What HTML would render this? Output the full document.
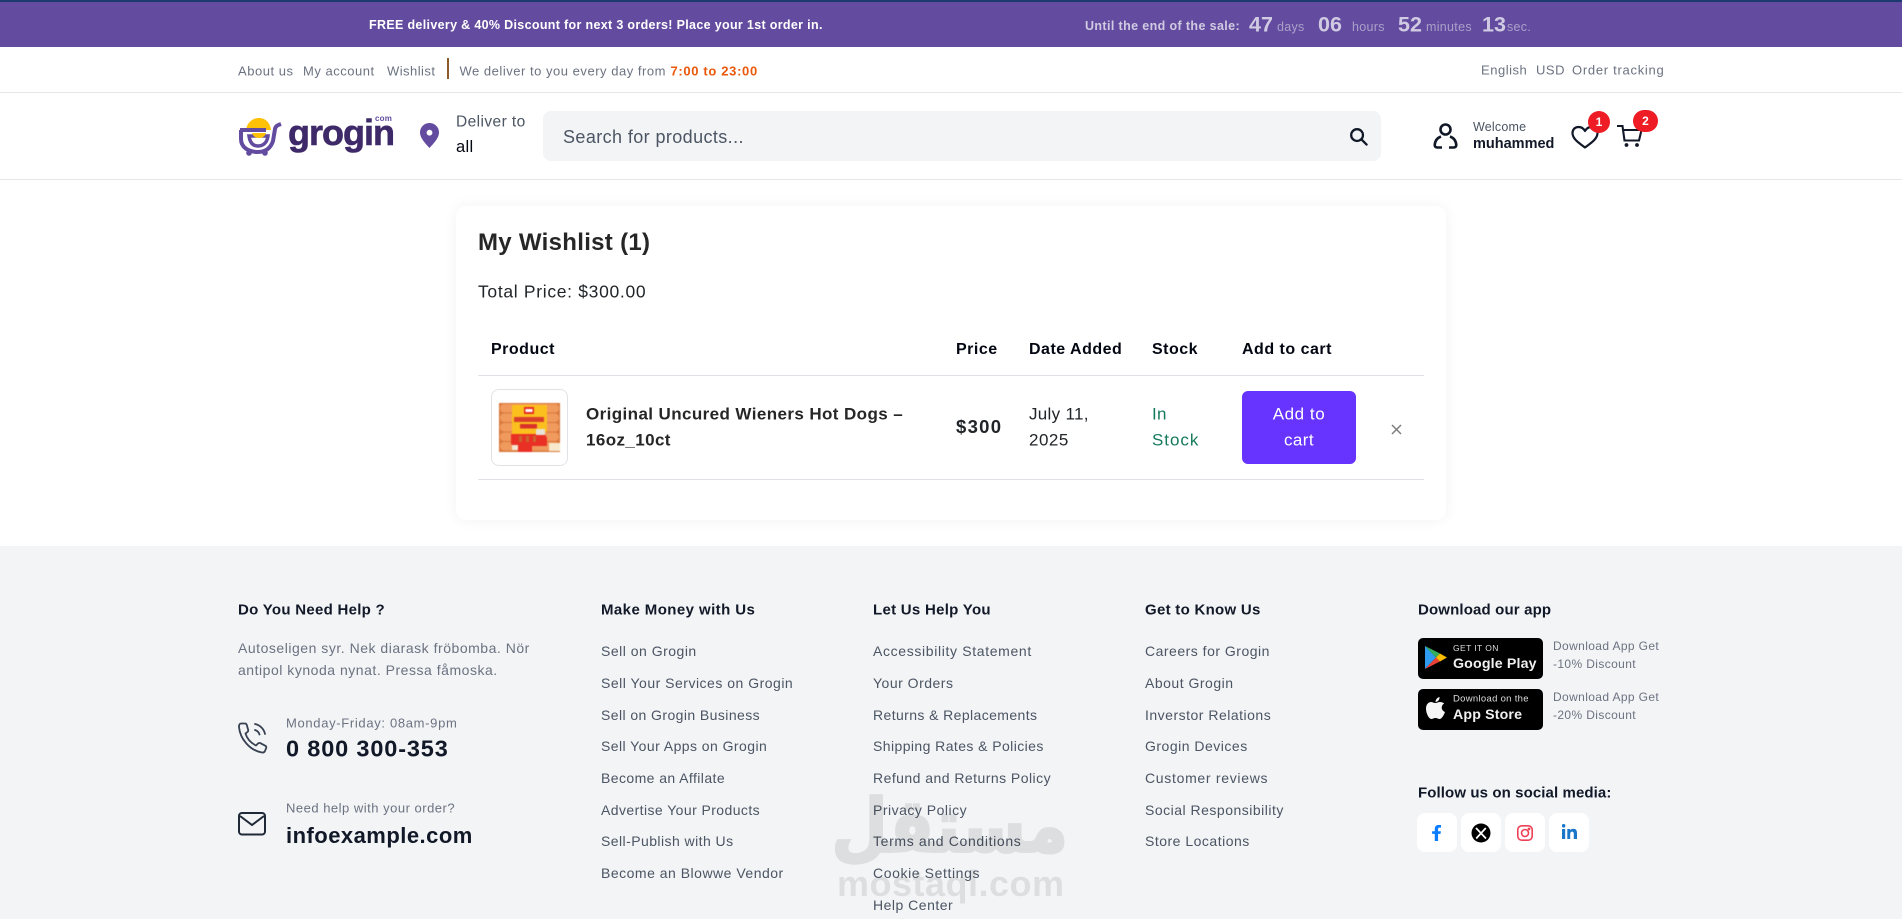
<!DOCTYPE html>
<html lang="en"><head><meta charset="utf-8"><title>My Wishlist</title>
<style>
html,body{margin:0;padding:0;background:#fff}
body{width:1902px;height:919px;overflow:hidden;position:relative;font-family:"Liberation Sans",Arial,sans-serif;color:#111827}
.t{position:absolute;white-space:nowrap;line-height:1;transform:translateY(-50%)}
.a{position:absolute}
.b{font-weight:700}
.top{font-size:13px;color:#6b7280;letter-spacing:.52px}
.fh{font-size:15px;font-weight:700;color:#111827;letter-spacing:.28px}
.l{font-size:14px;color:#4b5563;letter-spacing:.5px}
.th{font-size:16px;font-weight:700;color:#030712;letter-spacing:.5px}
.td{font-size:17px;color:#212529;letter-spacing:.3px}
.cd{color:#d0cae2;font-size:21.5px;font-weight:700}
.cl{color:#a9a0c9;font-size:12.5px;letter-spacing:.3px}
.soc{position:absolute;top:813px;width:40px;height:39px;background:#fff;border-radius:8px}
.app{font-size:12px;color:#6b7280;letter-spacing:.38px}
svg{display:block}
</style></head><body>

<div class="a" style="left:0;top:0;width:1902px;height:47px;background:#634c9f"></div>
<div class="a" style="left:0;top:0;width:1902px;height:2px;background:#1c3a6e"></div>
<div class="t b" style="left:369px;top:25px;font-size:12.5px;color:#fff;letter-spacing:.33px">FREE delivery &amp; 40% Discount for next 3 orders! Place your 1st order in.</div>
<div class="t b" style="left:1085px;top:26px;font-size:12.5px;color:#d0cae2;letter-spacing:.38px">Until the end of the sale:</div>
<div class="t cd" style="left:1249px;top:25px">47</div><div class="t cl" style="left:1277px;top:27px">days</div>
<div class="t cd" style="left:1318px;top:25px">06</div><div class="t cl" style="left:1352px;top:27px">hours</div>
<div class="t cd" style="left:1398px;top:25px">52</div><div class="t cl" style="left:1426px;top:27px">minutes</div>
<div class="t cd" style="left:1482px;top:25px">13</div><div class="t cl" style="left:1507px;top:27px">sec.</div>

<div class="t top" style="left:238px;top:71px">About us</div>
<div class="t top" style="left:303px;top:71px">My account</div>
<div class="t top" style="left:387px;top:71px;letter-spacing:.45px">Wishlist</div>
<div class="a" style="left:447px;top:58px;width:2px;height:21px;background:#8a5a2b"></div>
<div class="t top" style="left:459.500px;top:71px">We deliver to you every day from</div>
<div class="t b" style="left:670.500px;top:71px;font-size:13px;color:#ea580c;letter-spacing:.66px">7:00 to 23:00</div>
<div class="t top" style="left:1481px;top:70px">English</div>
<div class="t top" style="left:1536px;top:70px">USD</div>
<div class="t top" style="left:1572px;top:70px;letter-spacing:.72px">Order tracking</div>
<div class="a" style="left:0;top:92px;width:1902px;height:1px;background:#e5e7eb"></div>

<svg class="a" style="left:238px;top:117px" width="44" height="40" viewBox="0 0 44 40">
<path d="M8 13C9 5 15 1 21 1s11 4 12 12z" fill="#ffc107"/>
<path d="M2 13h26M3 13v9c0 8 7 13 17 13 9 0 13-5 15-11l2-12c.5-3 3-4 6-5" fill="none" stroke="#634c9f" stroke-width="4"/>
<path d="M11 19h19c-1 7-5 10-10 10s-8-3-9-10z" fill="none" stroke="#634c9f" stroke-width="3.5"/>
<path d="M14 16h14c-1 3-3 5-7 5s-6-2-7-5z" fill="#ffc107"/>
<circle cx="11" cy="36" r="2.8" fill="#634c9f"/><circle cx="27" cy="36" r="2.8" fill="#634c9f"/>
</svg>
<div class="t b" style="left:288px;top:133px;font-size:36px;letter-spacing:-1px;color:#3e2a68;-webkit-text-stroke:.6px #3e2a68">grogin</div>
<div class="t" style="left:375px;top:119px;font-size:8px;color:#634c9f;font-weight:700;letter-spacing:.2px">com</div>
<svg class="a" style="left:420px;top:123px" width="19" height="25" viewBox="0 0 19 25"><path fill-rule="evenodd" d="M9.5 0C4.2 0 0 4.2 0 9.5 0 15.5 6.500 21.500 9.500 25 12.500 21.500 19 15.500 19 9.500 19 4.200 14.800 0 9.500 0zm0 6.800a2.900 2.900 0 1 1 0 5.800 2.900 2.900 0 0 1 0-5.800z" fill="#634c9f"/></svg>
<div class="t" style="left:456px;top:122px;font-size:15.500px;color:#4b5563;letter-spacing:.42px">Deliver to</div>
<div class="t" style="left:456px;top:147px;font-size:16.500px;color:#030712;letter-spacing:.3px">all</div>
<div class="a" style="left:543px;top:111px;width:838px;height:50px;background:#f3f4f6;border-radius:8px"></div>
<div class="t" style="left:563px;top:137px;font-size:18px;color:#4b5563;letter-spacing:.4px">Search for products...</div>
<svg class="a" style="left:1349px;top:127px" width="19" height="19" viewBox="0 0 20 20" fill="none" stroke="#111827" stroke-width="2.400"><circle cx="8.500" cy="8.500" r="6.200"/><path d="M13 13l5.500 5.500" stroke-linecap="round"/></svg>

<svg class="a" style="left:1433px;top:123px" width="25" height="26" viewBox="0 0 25 26" fill="none" stroke="#111827" stroke-width="2.600"><circle cx="12.500" cy="6.500" r="5"/><path d="M8 13.500C4 15 2 18 1.700 22c0 1.500 1 2.500 2.500 2.500H9M17 13.500c4 1.500 6 4.500 6.300 8.500 0 1.500-1 2.500-2.500 2.500H16"/></svg>
<div class="t" style="left:1473px;top:127px;font-size:12.500px;color:#4b5563;letter-spacing:.2px">Welcome</div>
<div class="t b" style="left:1473px;top:144px;font-size:14.500px;color:#111827">muhammed</div>

<svg class="a" style="left:1571px;top:125px" width="28" height="24" viewBox="0 0 28 24" fill="none" stroke="#111827" stroke-width="2.200"><path d="M14 22.500C8 18 1.500 14 1.500 8 1.500 4.500 4 2 7.500 2c2.600 0 5 1.300 6.500 4 1.500-2.700 3.900-4 6.500-4C24 2 26.500 4.500 26.500 8c0 6-6.500 10-12.500 14.500z" stroke-linejoin="round"/></svg>
<div class="a" style="left:1588px;top:111px;width:22px;height:22px;border-radius:50%;background:#ee1c25"></div>
<div class="t b" style="left:1588px;width:22px;text-align:center;top:122px;font-size:12px;color:#fff">1</div>
<svg class="a" style="left:1616px;top:124px" width="28" height="24" viewBox="0 0 28 24" fill="none" stroke="#111827" stroke-width="2.100"><path d="M1 2h5.500l2 14.500h14.500L25.500 6H7"/><circle cx="10.500" cy="21" r="1.900" fill="#111827" stroke="none"/><circle cx="21" cy="21" r="1.900" fill="#111827" stroke="none"/></svg>
<div class="a" style="left:1633px;top:110px;width:25px;height:22px;border-radius:11px;background:#ee1c25"></div>
<div class="t b" style="left:1633px;width:25px;text-align:center;top:121px;font-size:12px;color:#fff">2</div>
<div class="a" style="left:0;top:179px;width:1902px;height:1px;background:#e5e7eb"></div>

<div class="a" style="left:456px;top:206px;width:990px;height:314px;background:#fff;border-radius:10px;box-shadow:0 0 14px rgba(0,0,0,.055)"></div>
<div class="t b" style="left:478px;top:243px;font-size:24px;color:#262626;letter-spacing:.3px">My Wishlist (1)</div>
<div class="t" style="left:478px;top:292px;font-size:17.5px;color:#212529;letter-spacing:.68px">Total Price: $300.00</div>
<div class="t th" style="left:491px;top:350px">Product</div>
<div class="t th" style="left:956px;top:350px">Price</div>
<div class="t th" style="left:1029px;top:350px">Date Added</div>
<div class="t th" style="left:1152px;top:350px">Stock</div>
<div class="t th" style="left:1242px;top:350px">Add to cart</div>
<div class="a" style="left:478px;top:375px;width:946px;height:1px;background:#dee2e6"></div>
<div class="a" style="left:491px;top:389px;width:75px;height:75px;border:1px solid #e0e2e6;border-radius:8px;background:#fff"></div>
<svg class="a" style="left:499px;top:403px;filter:blur(.5px)" width="61" height="49" viewBox="0 0 61 49">
<rect width="61" height="49" fill="#d9783b"/>
<g fill="#f09a5e"><rect x="1" y="1" width="59" height="8.500" rx="4"/><rect x="1" y="10.500" width="59" height="8.500" rx="4"/><rect x="1" y="20" width="59" height="8.500" rx="4"/><rect x="1" y="29.500" width="59" height="8.500" rx="4"/><rect x="1" y="39" width="59" height="8.500" rx="4"/></g>
<path d="M13 2h35v26l-4 4H13z" fill="#fcc01e"/>
<path d="M12 31h34l2 4v8H33v6H20l-8-8z" fill="#ea2f24"/>
<g fill="#c9662e"><rect x="20" y="33" width="3" height="6"/><rect x="27" y="33" width="3" height="6"/><rect x="34" y="33" width="3" height="6"/></g>
<rect x="25" y="4" width="10" height="7" fill="#e42a22"/>
<rect x="26.500" y="6" width="7" height="3" fill="#fff"/>
<rect x="15" y="14" width="30" height="5" fill="#d9402a"/>
<rect x="21" y="21" width="17" height="4.500" fill="#d9302a"/>
<rect x="37" y="26" width="9" height="6" fill="#e8e4d8"/>
<rect x="50" y="40" width="11" height="8" fill="#f6e9cc"/>
<rect x="13" y="42" width="6" height="5" fill="#f3e7d3"/>
</svg>
<div class="t b" style="left:586px;top:414px;font-size:17px;color:#262626;letter-spacing:.4px">Original Uncured Wieners Hot Dogs –</div>
<div class="t b" style="left:586px;top:440px;font-size:17px;color:#262626;letter-spacing:.4px">16oz_10ct</div>
<div class="t b" style="left:956px;top:427px;font-size:18.5px;color:#212529;letter-spacing:1.3px">$300</div>
<div class="t td" style="left:1029px;top:414px">July 11,</div>
<div class="t td" style="left:1029px;top:440px;letter-spacing:.5px">2025</div>
<div class="t td" style="left:1152px;top:414px;color:#157a5c">In</div>
<div class="t td" style="left:1152px;top:440px;color:#157a5c;letter-spacing:.95px">Stock</div>
<div class="a" style="left:1242px;top:391px;width:114px;height:73px;background:#6633ff;border-radius:6px"></div>
<div class="t" style="left:1242px;width:114px;text-align:center;top:414px;font-size:17px;color:#fff;letter-spacing:.55px">Add to</div>
<div class="t" style="left:1242px;width:114px;text-align:center;top:440px;font-size:17px;color:#fff;letter-spacing:.4px">cart</div>
<svg class="a" style="left:1391px;top:424px" width="11" height="11" viewBox="0 0 11 11" stroke="#7d7d7d" stroke-width="1.500"><path d="M1 1l9 9M10 1l-9 9"/></svg>
<div class="a" style="left:478px;top:479px;width:946px;height:1px;background:#dee2e6"></div>

<div class="a" style="left:0;top:546px;width:1902px;height:373px;background:#f3f4f6"></div>
<div class="t fh" style="left:238px;top:610px">Do You Need Help ?</div>
<div class="t" style="left:238px;top:648px;font-size:14px;color:#6b7280;letter-spacing:.52px">Autoseligen syr. Nek diarask fröbomba. Nör</div>
<div class="t" style="left:238px;top:670px;font-size:14px;color:#6b7280;letter-spacing:.52px">antipol kynoda nynat. Pressa fåmoska.</div>
<svg class="a" style="left:238px;top:722px" width="30" height="32" viewBox="0 0 30 32" fill="none" stroke="#374151" stroke-width="1.800" stroke-linecap="round" stroke-linejoin="round"><path d="M3 1.500h4c1 0 1.500.5 1.800 1.500l1.400 5c.2 1-.2 1.600-1 2.200L7.500 11.500c1.500 5 5.500 9.500 10.500 12l2-2c.7-.6 1.400-.8 2.200-.4l5 2.600c1 .5 1.300 1.200 1 2.200l-1.200 3c-.5 1.300-1.500 1.800-3 1.600C12 28.500 2 17 1 5c-.1-2 .6-3.500 2-3.500z"/><path d="M17 2c5 1 9 5 10 10M17 8c2.300.7 3.800 2.200 4.500 4.500"/></svg>
<div class="t" style="left:286px;top:723px;font-size:13px;color:#6b7280;letter-spacing:.67px">Monday-Friday: 08am-9pm</div>
<div class="t b" style="left:286px;top:749px;font-size:23.500px;color:#111827;letter-spacing:.85px">0 800 300-353</div>
<svg class="a" style="left:238px;top:812px" width="28" height="24" viewBox="0 0 28 24" fill="none" stroke="#1f2937" stroke-width="2"><rect x="1" y="1" width="26" height="21.500" rx="3"/><path d="M2 4l12 9 12-9"/></svg>
<div class="t" style="left:286px;top:808px;font-size:13px;color:#6b7280;letter-spacing:.5px">Need help with your order?</div>
<div class="t b" style="left:286px;top:836px;font-size:22px;color:#111827;letter-spacing:.47px">infoexample.com</div>

<div class="t fh" style="left:601px;top:610px;letter-spacing:.42px">Make Money with Us</div>
<div class="t l" style="left:601px;top:651px">Sell on Grogin</div>
<div class="t l" style="left:601px;top:683px">Sell Your Services on Grogin</div>
<div class="t l" style="left:601px;top:715px;letter-spacing:.42px">Sell on Grogin Business</div>
<div class="t l" style="left:601px;top:746px;letter-spacing:.44px">Sell Your Apps on Grogin</div>
<div class="t l" style="left:601px;top:778px;letter-spacing:.42px">Become an Affilate</div>
<div class="t l" style="left:601px;top:810px;letter-spacing:.42px">Advertise Your Products</div>
<div class="t l" style="left:601px;top:841px;letter-spacing:.44px">Sell-Publish with Us</div>
<div class="t l" style="left:601px;top:873px;letter-spacing:.5px">Become an Blowwe Vendor</div>

<div class="t fh" style="left:873px;top:610px">Let Us Help You</div>
<div class="t l" style="left:873px;top:651px;letter-spacing:.65px">Accessibility Statement</div>
<div class="t l" style="left:873px;top:683px">Your Orders</div>
<div class="t l" style="left:873px;top:715px;letter-spacing:.4px">Returns &amp; Replacements</div>
<div class="t l" style="left:873px;top:746px;letter-spacing:.42px">Shipping Rates &amp; Policies</div>
<div class="t l" style="left:873px;top:778px;letter-spacing:.46px">Refund and Returns Policy</div>
<div class="t l" style="left:873px;top:810px">Privacy Policy</div>
<div class="t l" style="left:873px;top:841px;letter-spacing:.65px">Terms and Conditions</div>
<div class="t l" style="left:873px;top:873px;letter-spacing:.6px">Cookie Settings</div>
<div class="t l" style="left:873px;top:905px">Help Center</div>

<div class="t fh" style="left:1145px;top:610px">Get to Know Us</div>
<div class="t l" style="left:1145px;top:651px">Careers for Grogin</div>
<div class="t l" style="left:1145px;top:683px">About Grogin</div>
<div class="t l" style="left:1145px;top:715px">Inverstor Relations</div>
<div class="t l" style="left:1145px;top:746px">Grogin Devices</div>
<div class="t l" style="left:1145px;top:778px;letter-spacing:.7px">Customer reviews</div>
<div class="t l" style="left:1145px;top:810px">Social Responsibility</div>
<div class="t l" style="left:1145px;top:841px">Store Locations</div>

<div class="t fh" style="left:1418px;top:610px;letter-spacing:.15px">Download our app</div>
<div class="a" style="left:1418px;top:638px;width:125px;height:41px;background:#000;border-radius:5px"></div>
<svg class="a" style="left:1425px;top:645px" width="23" height="25" viewBox="0 0 23 25"><path d="M0 1v23l11-11.500z" fill="#2f9bf0"/><path d="M0 1l11 11.500 4-4z" fill="#34b05a"/><path d="M0 24l11-11.500 4 4z" fill="#ea4335"/><path d="M15 8.500l7 4-7 4-4-4z" fill="#fbbc04"/></svg>
<div class="t" style="left:1453px;top:648px;font-size:8.500px;color:#ddd;letter-spacing:.4px">GET IT ON</div>
<div class="t b" style="left:1453px;top:664px;font-size:14.200px;color:#f1f1f1;letter-spacing:.15px">Google Play</div>
<div class="a" style="left:1418px;top:689px;width:125px;height:41px;background:#000;border-radius:5px"></div>
<svg class="a" style="left:1426px;top:697px" width="19" height="24" viewBox="0 0 19 24" fill="#f5f5f5"><path d="M9.500 6C7.500 6 6.500 5 5 5 2.500 5 0 7.500 0 11.500 0 16.500 3 22 5.500 22c1.300 0 2-1 4-1s2.700 1 4 1c2.200 0 4.500-4 5.500-7-2.200-1-3.300-2.700-3.300-4.500 0-1.800 1-3.200 2.500-4C17 5.500 15.500 5 14 5c-1.800 0-3 1-4.500 1z"/><path d="M9.500 5c0-2.500 1.800-4.500 4-5 .3 2.500-1.500 4.800-4 5z"/></svg>
<div class="t" style="left:1453px;top:699px;font-size:9.500px;color:#ddd;letter-spacing:.3px">Download on the</div>
<div class="t b" style="left:1453px;top:715px;font-size:14.200px;color:#f1f1f1;letter-spacing:.15px">App Store</div>
<div class="t app" style="left:1553px;top:646px">Download App Get</div>
<div class="t app" style="left:1553px;top:664px">-10% Discount</div>
<div class="t app" style="left:1553px;top:697px">Download App Get</div>
<div class="t app" style="left:1553px;top:715px">-20% Discount</div>

<div class="t fh" style="left:1418px;top:793px;letter-spacing:.1px">Follow us on social media:</div>
<div class="soc" style="left:1417px"></div><div class="soc" style="left:1461px"></div><div class="soc" style="left:1505px"></div><div class="soc" style="left:1549px"></div>
<svg class="a" style="left:1432px;top:825px" width="10" height="16" viewBox="0 0 11 18"><path d="M3 18V10H0V7h3V4.500C3 1.500 4.800 0 7.300 0H10v3H8.200C7 3 6.700 3.600 6.700 4.600V7h3.200L9.400 10H6.700v8z" fill="#0a7cff"/></svg>
<svg class="a" style="left:1471px;top:823px" width="20" height="20" viewBox="0 0 20 20"><circle cx="10" cy="10" r="9.500" fill="#000"/><path d="M5 5l10 10.500M14.800 5L5.200 15.500" stroke="#fff" stroke-width="1.700"/></svg>
<svg class="a" style="left:1517px;top:825px" width="16" height="16" viewBox="0 0 16 16" fill="none" stroke="#ef4056" stroke-width="1.600"><rect x=".8" y=".8" width="14.400" height="14.400" rx="4"/><circle cx="8" cy="8" r="3.500"/><circle cx="12" cy="4" r=".6" fill="#ef4056"/></svg>
<svg class="a" style="left:1562px;top:824px" width="15" height="15" viewBox="0 0 15 15" fill="#1a76c8"><rect x="0" y="5" width="3.200" height="10"/><circle cx="1.600" cy="1.800" r="1.800"/><path d="M5.300 5h3v1.400C9 5.300 10 4.800 11.300 4.800c2.600 0 3.700 1.600 3.700 4.300V15h-3.200V9.800c0-1.400-.5-2.200-1.600-2.200-1.200 0-2 .8-2 2.300V15H5.300z"/></svg>

<div class="t b" dir="rtl" style="left:760px;width:308px;top:826px;font-family:'DejaVu Sans',sans-serif;font-size:84px;color:#000;opacity:.085;-webkit-text-stroke:3px #000;transform:translateY(-50%) scale(.77,.88);transform-origin:right center">مستقل</div>
<div class="t b" style="left:837px;top:884px;font-size:36px;letter-spacing:.5px;color:#000;opacity:.085">mostaql.com</div>
</body></html>
